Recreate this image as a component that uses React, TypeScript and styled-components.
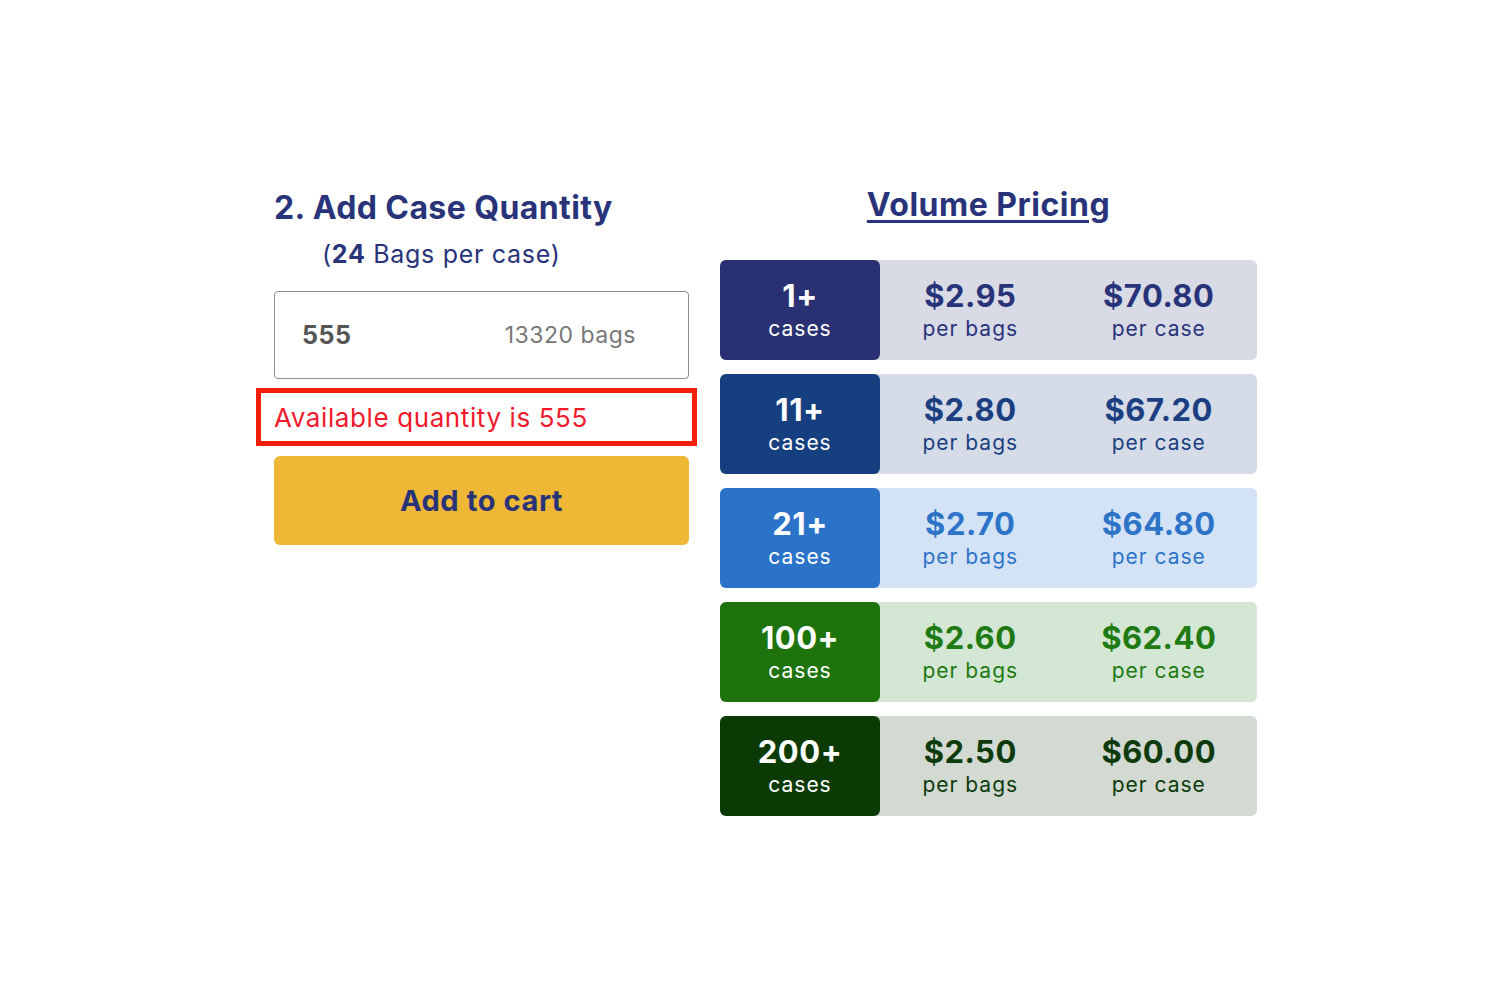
import React from "react";
import styled, { createGlobalStyle } from "styled-components";

const Global = createGlobalStyle`
  html, body { margin: 0; padding: 0; background: #fff; }
  body { font-family: "Inter", "Roboto", "Liberation Sans", sans-serif; }
`;

const Page = styled.div`
  width: 1500px;
  height: 1000px;
  display: flex;
  justify-content: flex-start;
  align-items: flex-start;
  padding: 188px 0 0 274px;
  box-sizing: border-box;
  gap: 31px;
`;

const LeftCol = styled.div`
  width: 415px;
  display: flex;
  flex-direction: column;
`;

const Heading = styled.h2`
  margin: 0;
  font-size: 32px;
  font-weight: 700;
  color: #28337a;
  letter-spacing: 0.4px;
  line-height: 40px;
`;

const Sub = styled.div`
  margin: 10px 0 0 48px;
  font-size: 25px;
  color: #28337a;
  line-height: 32px;
  letter-spacing: 0.7px;
  b { font-weight: 700; }
`;

const InputBox = styled.div`
  margin-top: 21px;
  height: 88px;
  border: 1.5px solid #8e8e8e;
  border-radius: 4px;
  display: flex;
  align-items: center;
  justify-content: space-between;
  padding: 0 52px 0 27px;
  box-sizing: border-box;
`;

const Qty = styled.span`
  font-size: 25px;
  font-weight: 700;
  color: #555;
  letter-spacing: 0.5px;
`;

const Bags = styled.span`
  font-size: 23px;
  color: #777;
  letter-spacing: 0.5px;
`;

const ErrorBox = styled.div`
  margin: 9px -8px 0 -18px;
  height: 58px;
  border: 5px solid #f41e0a;
  box-sizing: border-box;
  display: flex;
  align-items: center;
  padding-left: 13px;
  font-size: 26px;
  letter-spacing: 0.6px;
  color: #f01a2c;
`;

const CartButton = styled.button`
  margin-top: 10px;
  height: 89px;
  border: none;
  border-radius: 6px;
  background: #eeb735;
  color: #28337a;
  font-family: inherit;
  font-size: 29px;
  font-weight: 700;
  letter-spacing: 0.6px;
  cursor: pointer;
`;

const RightCol = styled.div`
  width: 537px;
  display: flex;
  flex-direction: column;
`;

const Title = styled.h2`
  margin: -2px 0 36px;
  text-align: center;
  font-size: 32px;
  font-weight: 700;
  color: #28337a;
  line-height: 38px;
  text-decoration: underline;
  text-decoration-thickness: 3px;
  text-underline-offset: 4px;
  letter-spacing: 0.5px;
`;

const Rows = styled.div`
  display: flex;
  flex-direction: column;
  gap: 14px;
`;

const Row = styled.div<{ $bg: string }>`
  display: grid;
  grid-template-columns: 160px 1fr 1fr;
  height: 100px;
  background: ${(p) => p.$bg};
  border-radius: 6px;
`;

const Tier = styled.div<{ $c: string }>`
  background: ${(p) => p.$c};
  border-radius: 6px;
  color: #fff;
  display: flex;
  flex-direction: column;
  align-items: center;
  justify-content: center;
`;

const Big = styled.div`
  font-size: 31px;
  font-weight: 700;
  line-height: 34px;
  letter-spacing: 0.5px;
`;

const Small = styled.div`
  font-size: 21px;
  line-height: 26px;
  margin-top: 3px;
  letter-spacing: 1px;
`;

const Price = styled.div<{ $c: string }>`
  color: ${(p) => p.$c};
  display: flex;
  flex-direction: column;
  align-items: center;
  justify-content: center;
  padding-right: 8px;
`;

const tiers = [
  { n: "1+", pb: "$2.95", pc: "$70.80", dark: "#2a3172", bg: "#d8dbe6", text: "#28337a" },
  { n: "11+", pb: "$2.80", pc: "$67.20", dark: "#163f80", bg: "#d5dce8", text: "#1b3f80" },
  { n: "21+", pb: "$2.70", pc: "$64.80", dark: "#2a73c8", bg: "#d3e3f5", text: "#2d74c8" },
  { n: "100+", pb: "$2.60", pc: "$62.40", dark: "#1e730c", bg: "#d4e6d4", text: "#1e7a12" },
  { n: "200+", pb: "$2.50", pc: "$60.00", dark: "#0c3a05", bg: "#d2dad1", text: "#0e3b0b" },
];

export default function App() {
  return (
    <>
      <Global />
      <Page>
        <LeftCol>
          <Heading>2. Add Case Quantity</Heading>
          <Sub>
            (<b>24</b> Bags per case)
          </Sub>
          <InputBox>
            <Qty>555</Qty>
            <Bags>13320 bags</Bags>
          </InputBox>
          <ErrorBox>Available quantity is 555</ErrorBox>
          <CartButton>Add to cart</CartButton>
        </LeftCol>
        <RightCol>
          <Title>Volume Pricing</Title>
          <Rows>
            {tiers.map((t) => (
              <Row key={t.n} $bg={t.bg}>
                <Tier $c={t.dark}>
                  <Big>{t.n}</Big>
                  <Small>cases</Small>
                </Tier>
                <Price $c={t.text}>
                  <Big>{t.pb}</Big>
                  <Small>per bags</Small>
                </Price>
                <Price $c={t.text}>
                  <Big>{t.pc}</Big>
                  <Small>per case</Small>
                </Price>
              </Row>
            ))}
          </Rows>
        </RightCol>
      </Page>
    </>
  );
}
